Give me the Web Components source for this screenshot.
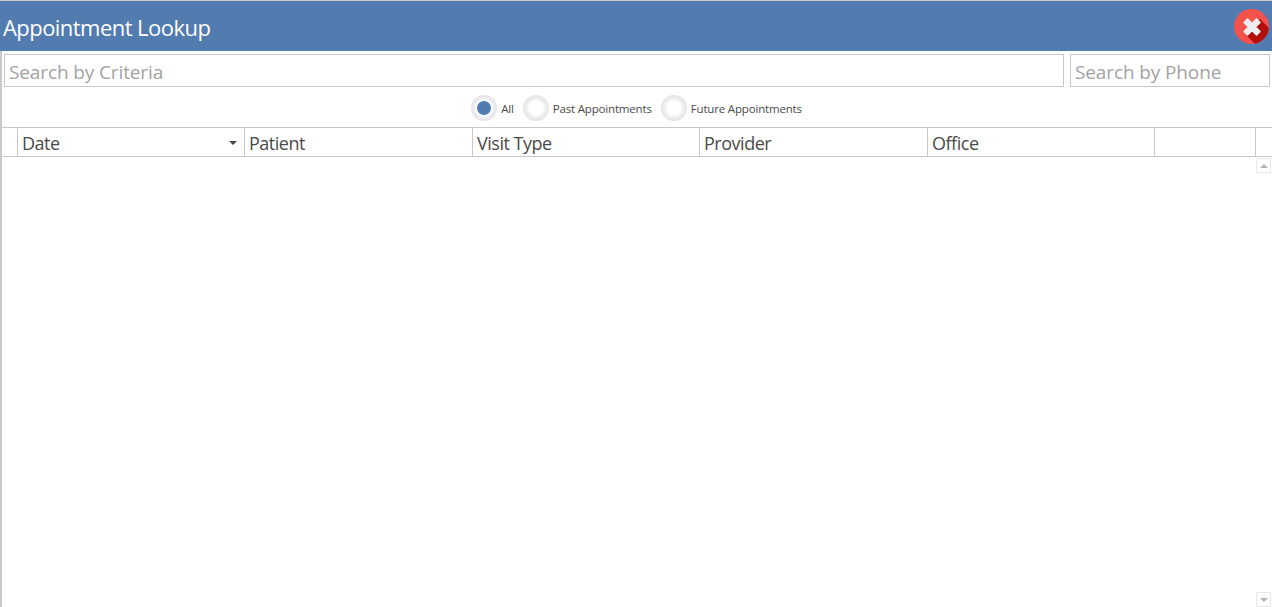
<!DOCTYPE html>
<html><head><meta charset="utf-8">
<style>
html,body{margin:0;padding:0;height:100%;background:#fff;overflow:hidden}
body{font-family:"Open Sans","Noto Sans",sans-serif}
</style></head><body>
<lookup-window>
  <title-bar slot="bar">Appointment Lookup</title-bar>
  <search-box style="flex:1">Search by Criteria</search-box>
  <search-box style="width:200px">Search by Phone</search-box>
  <radio-row slot="radios">
    <radio-opt checked>All</radio-opt>
    <radio-opt>Past Appointments</radio-opt>
    <radio-opt>Future Appointments</radio-opt>
  </radio-row>
  <grid-header slot="grid">
    <grid-col w="16"></grid-col>
    <grid-col w="227" sort>Date</grid-col>
    <grid-col w="228">Patient</grid-col>
    <grid-col w="227">Visit Type</grid-col>
    <grid-col w="228">Provider</grid-col>
    <grid-col w="227">Office</grid-col>
    <grid-col w="101"></grid-col>
  </grid-header>
  <grid-body slot="grid"></grid-body>
</lookup-window>
<script>
function def(name,css,html,init){
  customElements.define(name,class extends HTMLElement{
    constructor(){super();const r=this.attachShadow({mode:'open'});r.innerHTML='<style>'+css+'</style>'+html;}
    connectedCallback(){if(init)init(this)}
  });
}
def('lookup-window',
 `:host{display:flex;flex-direction:column;height:607px;box-sizing:border-box;border-left:2px solid #c9c9c9;border-top:1px solid #c9c9c9}
  .search{display:flex;gap:6px;padding:3px 2px 0 2px}
  .radios{display:flex;justify-content:center;padding:8px 0 6px 0}
  .grid{display:flex;flex-direction:column;flex:1;min-height:0}`,
 `<slot name="bar"></slot>
  <div class="search"><slot></slot></div>
  <div class="radios"><slot name="radios"></slot></div>
  <div class="grid"><slot name="grid"></slot></div>`);
def('title-bar',
 `:host{display:flex;align-items:center;justify-content:space-between;height:50px;margin-left:-2px;box-sizing:border-box;padding:0 3px 0 3px;background:#527bb0;color:#fff;font:22px "Open Sans",sans-serif;letter-spacing:-.55px}
  span{position:relative;top:1px}
  svg{display:block}`,
 `<span><slot></slot></span>
  <svg width="35" height="35" viewBox="0 0 35 35">
   <defs><clipPath id="c"><circle cx="17.5" cy="17.5" r="17.5"/></clipPath></defs>
   <circle cx="17.5" cy="17.5" r="17.5" fill="#f4524d"/>
   <path clip-path="url(#c)" d="M12 26 L26 10 L40 24 L40 40 L26 40Z" fill="#b30f0a"/>
   <path d="M10 13.5 L13.5 10 L18 14.5 L22.5 10 L26 13.5 L21.5 18 L26 22.5 L22.5 26 L18 21.5 L13.5 26 L10 22.5 L14.5 18Z" fill="#ecedf0" stroke="#ecedf0" stroke-width="1.5" stroke-linejoin="round"/>
  </svg>`);
def('search-box',
 `:host{display:block;box-sizing:border-box;height:33px;border:1px solid #c8c8c8;background:#fff;color:#a3a3a3;font:19px/34px "Open Sans",sans-serif;letter-spacing:-.12px;padding-left:4px;white-space:nowrap;overflow:hidden}`,
 `<slot></slot>`);
def('radio-row',
 `:host{display:flex;gap:9px;align-items:center;margin-left:-1px}`,
 `<slot></slot>`);
def('radio-opt',
 `:host{display:flex;align-items:center;gap:4px;font:11.5px "Open Sans",sans-serif;letter-spacing:-.17px;color:#4a4a4a;height:26px}
  .o{width:26px;height:26px;border-radius:50%;background:radial-gradient(circle,#fff 0 36%,#efefef 52%,#dadada 85%,#d2d2d2 100%);display:flex;align-items:center;justify-content:center}
  .i{width:14px;height:14px;border-radius:50%;background:transparent}
  :host([checked]) .i{background:#527bb0}`,
 `<span class="o"><span class="i"></span></span><span><slot></slot></span>`);
def('grid-header',
 `:host{display:flex;height:30px;box-sizing:border-box;border-top:1px solid #c8c8c8;border-bottom:1px solid #c8c8c8}`,
 `<slot></slot>`);
def('grid-col',
 `:host{display:flex;align-items:center;justify-content:space-between;box-sizing:border-box;border-right:1px solid #c8c8c8;padding:1px 7px 0 4px;font:18px "Open Sans",sans-serif;letter-spacing:-.48px;color:#4a4a4a;white-space:nowrap}
  .s{display:none;width:0;height:0;border-left:4px solid transparent;border-right:4px solid transparent;border-top:4px solid #444}
  :host([sort]) .s{display:block}`,
 `<span><slot></slot></span><span class="s"></span>`,
 el=>{el.style.width=el.getAttribute('w')+'px';el.style.flex='none'});
def('grid-body',
 `:host{display:flex;flex-direction:column;flex:1;min-height:0;align-items:flex-end;justify-content:space-between;padding:1px 1px 0 0}
  .b{box-sizing:border-box;width:15px;height:15px;border:1px solid #e8e8e8;display:flex;align-items:center;justify-content:center}
  .u{width:0;height:0;border-left:4px solid transparent;border-right:4px solid transparent;border-bottom:4px solid #b5b5b5}
  .d{width:0;height:0;border-left:4px solid transparent;border-right:4px solid transparent;border-top:4px solid #b5b5b5}`,
 `<div class="b"><span class="u"></span></div><div class="b"><span class="d"></span></div>`);
</script>
</body></html>
